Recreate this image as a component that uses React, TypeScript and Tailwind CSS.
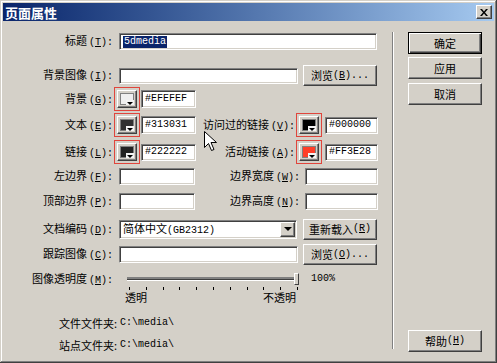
import React from "react";

const mono = "font-['Liberation_Mono','Noto_Sans_CJK_SC',monospace] text-[10px]";

const inputCls =
  "flex items-center bg-white border border-t-[#808080] border-l-[#808080] border-b-white border-r-white shadow-[inset_1px_1px_0_#404040,inset_-1px_-1px_0_#d4d0c8] px-[3px] leading-none";

const btnCls =
  "flex items-center justify-center bg-[#d4d0c8] border border-t-white border-l-white border-r-[#404040] border-b-[#404040] shadow-[inset_-1px_-1px_0_#808080] leading-none";

function Lbl({ t, k, colon = true }: { t: string; k: string; colon?: boolean }) {
  return (
    <span className="whitespace-nowrap">
      {t}
      <span className={`${mono} ml-[2px]`}>
        (<span className="underline">{k}</span>){colon ? ":" : ""}
      </span>
    </span>
  );
}

function Swatch({ fill }: { fill: string }) {
  return (
    <div className="flex h-[24px] w-[26px] items-center justify-center border border-[#e0453c]">
      <div className="relative h-[18px] w-[20px] border border-t-white border-l-white border-r-[#404040] border-b-[#404040] bg-[#d4d0c8] p-[2px] shadow-[inset_-1px_-1px_0_#808080]">
        <div className={`h-full w-full border border-[#808080] ${fill}`} />
        <div className="absolute right-[2px] bottom-[2px] flex h-[5px] w-[8px] items-end justify-center bg-[#f4f4f4]">
          <div className="h-0 w-0 border-x-[3px] border-t-[3px] border-x-transparent border-t-black" />
        </div>
      </div>
    </div>
  );
}

function Row({ label, children, h, mt }: { label: React.ReactNode; children: React.ReactNode; h: string; mt: string }) {
  return (
    <div className={`flex items-center ${h} ${mt}`}>
      <div className="w-[110px] shrink-0 text-right">{label}</div>
      {children}
    </div>
  );
}

function Ticks() {
  return (
    <div className="ml-[126px] flex w-[169px] justify-between">
      {Array.from({ length: 11 }).map((_, i) => (
        <div key={i} className="h-[3px] w-px bg-black" />
      ))}
    </div>
  );
}

export default function App() {
  return (
    <div className="relative h-[363px] w-[497px] overflow-hidden bg-[#d4d0c8] p-[3px] font-['Noto_Sans_CJK_SC',sans-serif] text-[11px] leading-none text-black shadow-[inset_-1px_-1px_0_#404040,inset_1px_1px_0_#d4d0c8,inset_-2px_-2px_0_#808080,inset_2px_2px_0_#ffffff]">
      {/* title bar */}
      <div className="flex h-[18px] items-center justify-between bg-gradient-to-r from-[#0a246a] to-[#a6caf0] pr-[2px] pl-[2px]">
        <span className="text-[13px] font-bold text-white">页面属性</span>
        <div className={`${btnCls} h-[14px] w-[16px]`}>
          <svg width="8" height="7" viewBox="0 0 8 7">
            <path d="M0 0h2l2 2.5L6 0h2L5 3.5 8 7H6L4 4.5 2 7H0l3-3.5z" fill="#000" />
          </svg>
        </div>
      </div>

      <div className="flex">
        {/* form */}
        <div className="flex w-[389px] flex-col pt-[12px]">
          <Row label={<Lbl t="标题" k="T" />} h="h-[17px]" mt="mt-0">
            <div className={`${inputCls} ml-[6px] h-[17px] w-[258px] ${mono}`}>
              <span className="bg-[#0a246a] px-px py-[1px] text-white">5dmedia</span>
            </div>
          </Row>

          <Row label={<Lbl t="背景图像" k="I" />} h="h-[21px]" mt="mt-[15px]">
            <div className={`${inputCls} ml-[6px] h-[16px] w-[179px]`} />
            <div className={`${btnCls} ml-[5px] h-[21px] w-[74px]`}>
              浏览<span className={mono}>(<span className="underline">B</span>)...</span>
            </div>
          </Row>

          <Row label={<Lbl t="背景" k="G" />} h="h-[26px]" mt="mt-0">
            <div className="ml-px">
              <Swatch fill="bg-[#efefef]" />
            </div>
            <div className={`${inputCls} ml-px h-[18px] w-[55px] ${mono}`}>#EFEFEF</div>
          </Row>

          <Row label={<Lbl t="文本" k="E" />} h="h-[26px]" mt="mt-0">
            <div className="ml-px">
              <Swatch fill="bg-[#313031]" />
            </div>
            <div className={`${inputCls} ml-px h-[18px] w-[55px] ${mono}`}>#313031</div>
            <div className="w-[99px] text-right">
              <Lbl t="访问过的链接" k="V" />
            </div>
            <div className="ml-px">
              <Swatch fill="bg-black" />
            </div>
            <div className={`${inputCls} ml-[3px] h-[17px] w-[53px] ${mono}`}>#000000</div>
          </Row>

          <Row label={<Lbl t="链接" k="L" />} h="h-[26px]" mt="mt-px">
            <div className="ml-px">
              <Swatch fill="bg-[#222222]" />
            </div>
            <div className={`${inputCls} ml-px h-[17px] w-[55px] ${mono}`}>#222222</div>
            <div className="w-[99px] text-right">
              <Lbl t="活动链接" k="A" />
            </div>
            <div className="ml-px">
              <Swatch fill="bg-[#ff3e28]" />
            </div>
            <div className={`${inputCls} ml-[3px] h-[17px] w-[53px] ${mono}`}>#FF3E28</div>
          </Row>

          <Row label={<Lbl t="左边界" k="F" />} h="h-[19px]" mt="mt-[2px]">
            <div className={`${inputCls} ml-[6px] h-[17px] w-[76px]`} />
            <div className="w-[105px] text-right">
              <Lbl t="边界宽度" k="W" />
            </div>
            <div className={`${inputCls} ml-[5px] h-[17px] w-[73px]`} />
          </Row>

          <Row label={<Lbl t="顶部边界" k="P" />} h="h-[19px]" mt="mt-[6px]">
            <div className={`${inputCls} ml-[6px] h-[17px] w-[76px]`} />
            <div className="w-[105px] text-right">
              <Lbl t="边界高度" k="N" />
            </div>
            <div className={`${inputCls} ml-[5px] h-[17px] w-[73px]`} />
          </Row>

          <Row label={<Lbl t="文档编码" k="D" />} h="h-[22px]" mt="mt-[7px]">
            <div className={`${inputCls} ml-[6px] h-[19px] w-[178px] justify-between pr-px`}>
              <span>
                简体中文<span className={mono}>(GB2312)</span>
              </span>
              <div className={`${btnCls} h-[15px] w-[15px]`}>
                <div className="h-0 w-0 border-x-[4px] border-t-[4px] border-x-transparent border-t-black" />
              </div>
            </div>
            <div className={`${btnCls} ml-[6px] h-[21px] w-[74px]`}>
              重新载入<span className={mono}>(<span className="underline">R</span>)</span>
            </div>
          </Row>

          <Row label={<Lbl t="跟踪图像" k="C" />} h="h-[21px]" mt="mt-[4px]">
            <div className={`${inputCls} ml-[6px] h-[17px] w-[179px]`} />
            <div className={`${btnCls} ml-[5px] h-[21px] w-[74px]`}>
              浏览<span className={mono}>(<span className="underline">O</span>)...</span>
            </div>
          </Row>

          <Row label={<Lbl t="图像透明度" k="M" />} h="h-[16px]" mt="mt-[6px]">
            <div className="relative ml-[14px] flex h-[16px] w-[173px] items-center">
              <div className="h-[4px] w-[170px] border-t-2 border-t-[#808080] border-b border-b-white bg-[#404040]" />
              <div className="absolute top-[2px] right-[1px] h-[12px] w-[5px] border border-t-white border-l-white border-r-[#404040] border-b-[#404040] bg-[#d4d0c8]" />
            </div>
            <span className={`${mono} ml-[11px]`}>100%</span>
          </Row>

          <div className="flex h-[18px] flex-col">
            <Ticks />
            <div className="mt-[2px] flex w-[293px] justify-between pl-[122px]">
              <span>透明</span>
              <span>不透明</span>
            </div>
          </div>

          <div className="mt-[11px] flex h-[14px] items-center">
            <span className="w-[114px] text-right">文件文件夹:</span>
            <span className={`${mono} ml-[3px]`}>C:\media\</span>
          </div>
          <div className="mt-[8px] flex h-[14px] items-center">
            <span className="w-[114px] text-right">站点文件夹:</span>
            <span className={`${mono} ml-[3px]`}>C:\media\</span>
          </div>
        </div>

        {/* separator */}
        <div className="mt-[11px] h-[317px] w-[2px] border-l border-l-[#808080] border-r border-r-white" />

        {/* buttons */}
        <div className="ml-[14px] flex w-[74px] flex-col pt-[11px]">
          <div className="flex h-[22px] items-center justify-center border border-black bg-[#d4d0c8] shadow-[inset_1px_1px_0_#ffffff,inset_-1px_-1px_0_#404040,inset_-2px_-2px_0_#808080]">
            确定
          </div>
          <div className={`${btnCls} mt-[3px] h-[22px]`}>应用</div>
          <div className={`${btnCls} mt-[4px] h-[22px]`}>取消</div>
          <div className={`${btnCls} mt-[225px] h-[22px]`}>
            帮助<span className={mono}>(<span className="underline">H</span>)</span>
          </div>
        </div>
      </div>

      {/* mouse pointer */}
      <svg className="absolute top-[131px] left-[204px]" width="13" height="21" viewBox="0 0 13 21">
        <path d="M0.5 0.5v16l4-4 3 7 2.5-1-3-7h5.5z" fill="#fff" stroke="#000" strokeWidth="1" />
      </svg>
    </div>
  );
}
